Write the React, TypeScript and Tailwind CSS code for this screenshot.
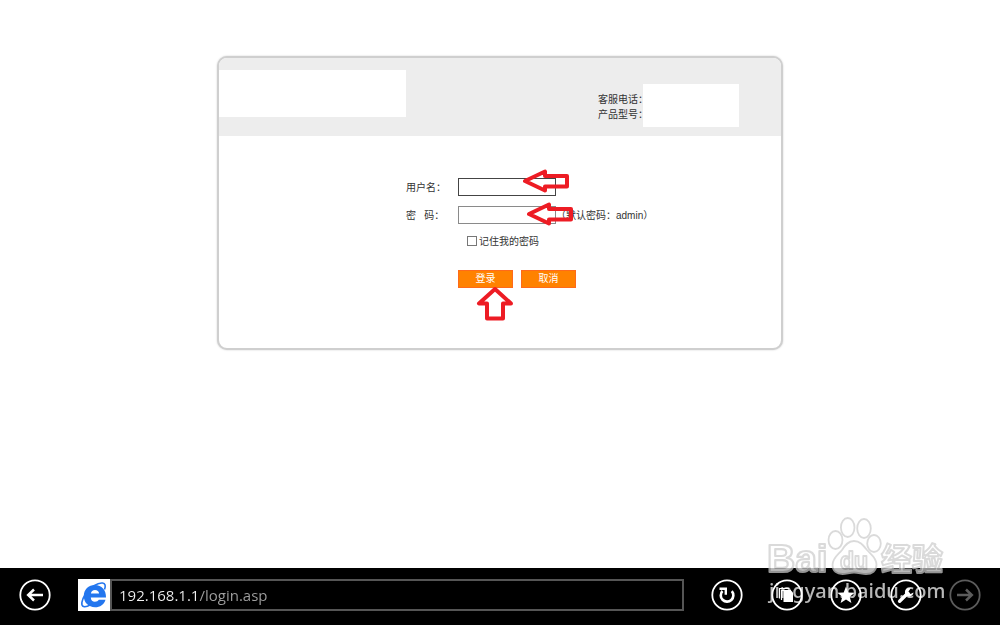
import React from "react";

const TOOLS = [
  {
    label: "Refresh",
    color: "text-white",
    icon: (
      <>
        <path d="M11.500 12a6.300 6.300 0 1 0 9.300 .2" fill="none" stroke="currentColor" strokeWidth="2.600" />
        <path d="M8.500 9.700h6.300v6" fill="none" stroke="currentColor" strokeWidth="2.400" />
      </>
    ),
  },
  {
    label: "Tabs",
    color: "text-white",
    icon: (
      <>
        <path d="M8.500 19.500V9.500H18" fill="none" stroke="currentColor" strokeWidth="1.200" />
        <path d="M10.500 21V11.500H20" fill="none" stroke="currentColor" strokeWidth="1.200" />
        <path d="M12.500 11h7l2.500 2.500V23h-9.500z" fill="currentColor" />
      </>
    ),
  },
  {
    label: "Favorites",
    color: "text-white",
    icon: (
      <path
        d="M16 7.500l2.300 6 6.400.3-5 4 1.700 6.200-5.400-3.500-5.400 3.500 1.700-6.200-5-4 6.400-.3z"
        fill="currentColor"
      />
    ),
  },
  {
    label: "Page tools",
    color: "text-white",
    icon: (
      <>
        <path d="M9.600 22.200l8.200-8" fill="none" stroke="currentColor" strokeWidth="3.400" strokeLinecap="round" />
        <path d="M20.800 9.200a4.300 4.300 0 1 0 2.700 4.300l-2.900 1.400-2.300-2.200z" fill="currentColor" />
      </>
    ),
  },
  {
    label: "Forward",
    color: "text-[#5c5c5c]",
    icon: (
      <path d="M8 16h14.500M17 10.500l5.800 5.500-5.800 5.500" fill="none" stroke="currentColor" strokeWidth="2.500" />
    ),
  },
];

type CircleButtonProps = {
  label: string;
  color: string;
  children: React.ReactNode;
};

function CircleButton({ label, color, children }: CircleButtonProps) {
  return (
    <button type="button" aria-label={label} className={`size-8 shrink-0 ${color}`}>
      <svg viewBox="0 0 32 32" className="size-8">
        <circle cx="16" cy="16" r="14.700" fill="none" stroke="currentColor" strokeWidth="1.800" />
        {children}
      </svg>
    </button>
  );
}

function LeftArrow({ className }: { className: string }) {
  return (
    <svg viewBox="0 0 48 24" className={`pointer-events-none absolute h-6 w-12 ${className}`}>
      <path
        d="M3 12L23 2.500V7H45V17.500H23V21.500Z"
        fill="none"
        stroke="#ed1c24"
        strokeWidth="4"
        strokeLinejoin="round"
      />
    </svg>
  );
}

function UpArrow({ className }: { className: string }) {
  return (
    <svg viewBox="0 0 40 36" className={`pointer-events-none absolute h-9 w-10 ${className}`}>
      <path
        d="M20 3L4 17.500H12V32.500H28V17.500H36Z"
        fill="none"
        stroke="#ed1c24"
        strokeWidth="4"
        strokeLinejoin="round"
      />
    </svg>
  );
}

function BrowserLogo() {
  return (
    <svg viewBox="0 0 32 32" className="size-8 shrink-0 bg-white">
      <path
        d="M28 18.500H12.800c.2 2.900 1.700 4.200 4.100 4.200 1.900 0 3.200-.7 3.900-2h6.700c-1.400 4.700-5.300 7.600-10.500 7.600-6.500 0-11.200-4.700-11.200-11.200C5.800 10.600 10.500 6 17 6c6.700 0 11.200 4.900 11 12.500zM12.900 14.400h8.200c-.2-2.200-1.800-3.500-4.100-3.500s-3.800 1.300-4.100 3.500z"
        fill="#2376ee"
        fillRule="evenodd"
      />
      <path
        d="M26.500 10.500c1.400-3.700 .8-6.200-2-6.500C20 3.500 12 8 7.500 15c-4.200 6.500-4.800 11.700-1.900 12.600 1.700.5 4.300-.3 6.900-1.800"
        fill="none"
        stroke="#2376ee"
        strokeWidth="1.600"
      />
    </svg>
  );
}

function Watermark() {
  return (
    <svg
      viewBox="0 0 184 92"
      className="pointer-events-none absolute right-[51px] bottom-[18px] h-[92px] w-[184px]"
    >
      <g fill="#ffffff" stroke="#cdcdcd" strokeWidth="1.800" opacity="0.720" strokeLinejoin="round">
        <text x="2" y="57" fontFamily="Liberation Sans" fontWeight="700" fontSize="39" strokeWidth="2.200">
          Bai
        </text>
        <ellipse cx="70.500" cy="25" rx="7" ry="9" />
        <ellipse cx="82.700" cy="12.500" rx="6.800" ry="9.500" />
        <ellipse cx="99" cy="13.500" rx="6.800" ry="9.500" />
        <ellipse cx="109" cy="28.500" rx="6.800" ry="8.500" />
        <path d="M89 26c-6 0-9 4-12 9-4 5-9.500 8-9.500 15 0 6 4.500 9 10 9 4 0 7-1.500 11.500-1.500S97 59 101 59c6 0 10.500-3 10.500-9.500 0-7-5.500-10-9.500-14.500-4-5-7-9-13-9z" />
        <text x="75" y="54" fontFamily="Liberation Sans" fontWeight="700" fontSize="23">
          du
        </text>
        <text x="116" y="55" fontFamily="Noto Sans CJK SC" fontWeight="700" fontSize="31" strokeWidth="2">
          经验
        </text>
      </g>
      <text x="4" y="83" fontFamily="Noto Sans" fontWeight="500" fontSize="20" fill="#ffffff" opacity="0.720">
        jingyan.baidu.com
      </text>
    </svg>
  );
}

function LoginPanel() {
  return (
    <section className="mx-auto w-full max-w-[566px] overflow-hidden rounded-[10px] border-2 border-[#cfcfcf] bg-white text-[10px] text-[#333] shadow-[0_0_2px_#ccc]">
      <header className="flex h-[78px] items-start justify-between bg-[#ededed] pt-3 pr-[42px]">
        <div className="h-[47px] w-[187px] bg-white" />
        <div className="flex pt-[14px]">
          <p className="w-[45px] pt-2 leading-[15px] whitespace-nowrap">
            客服电话：
            <br />
            产品型号：
          </p>
          <div className="h-[43px] w-24 bg-white" />
        </div>
      </header>

      <form className="flex flex-col gap-[10px] pt-[42px] pb-[60px] pl-[187px]" onSubmit={(e) => e.preventDefault()}>
        <div className="relative flex h-[18px] items-center">
          <label htmlFor="username" className="w-[52px] shrink-0">
            用户名：
          </label>
          <input id="username" type="text" className="h-[18px] w-[98px] border border-[#444] px-1 outline-none" />
          <LeftArrow className="-top-[9px] left-[116px]" />
        </div>
        <div className="relative flex h-[18px] items-center">
          <label htmlFor="password" className="w-[52px] shrink-0 whitespace-pre">
            {"密   码："}
          </label>
          <input id="password" type="password" className="h-[18px] w-[98px] border border-[#8a8a8a] px-1 outline-none" />
          <span className="whitespace-nowrap">（默认密码：admin）</span>
          <LeftArrow className="-top-1 left-[120px]" />
        </div>
        <div className="flex h-[14px] items-center gap-[2px] pl-[61px]">
          <input
            id="remember"
            type="checkbox"
            className="size-[10px] appearance-none border border-[#777] bg-white checked:bg-[#777]"
          />
          <label htmlFor="remember">记住我的密码</label>
        </div>
        <div className="relative mt-3 flex gap-2 pl-[52px] leading-4 text-white">
          <button type="submit" className="h-[18px] w-[55px] border border-[#ff6a1a] bg-[#ff8200]">
            登录
          </button>
          <button type="reset" className="h-[18px] w-[55px] border border-[#ff6a1a] bg-[#ff8200]">
            取消
          </button>
          <UpArrow className="top-4 left-[69px]" />
        </div>
      </form>
    </section>
  );
}

function BrowserBar() {
  return (
    <nav className="relative flex h-[57px] items-center bg-black px-[19px] pb-1">
      <CircleButton label="Back" color="text-white">
        <path d="M24 16H9.500M15 10.500L9.200 16l5.800 5.500" fill="none" stroke="currentColor" strokeWidth="2.500" />
      </CircleButton>
      <div className="mx-[27px] flex min-w-0 flex-1">
        <BrowserLogo />
        <input
          type="text"
          aria-label="Address"
          defaultValue="192.168.1.1/login.asp"
          className="h-8 min-w-0 flex-1 border-2 border-[#555] bg-[linear-gradient(90deg,#f2f2f2_87px,#a0a0a0_87px)] bg-clip-text px-[7px] font-['Open_Sans',sans-serif] text-[15px] text-transparent outline-none"
        />
      </div>
      <div className="flex w-[270px] shrink-0 justify-between">
        {TOOLS.map(({ label, color, icon }) => (
          <CircleButton key={label} label={label} color={color}>
            {icon}
          </CircleButton>
        ))}
      </div>
      <Watermark />
    </nav>
  );
}

export default function App() {
  return (
    <div className="flex min-h-screen flex-col bg-white font-['Liberation_Sans','Noto_Sans_CJK_SC',sans-serif]">
      <main className="flex-1 pt-14">
        <LoginPanel />
      </main>
      <BrowserBar />
    </div>
  );
}
